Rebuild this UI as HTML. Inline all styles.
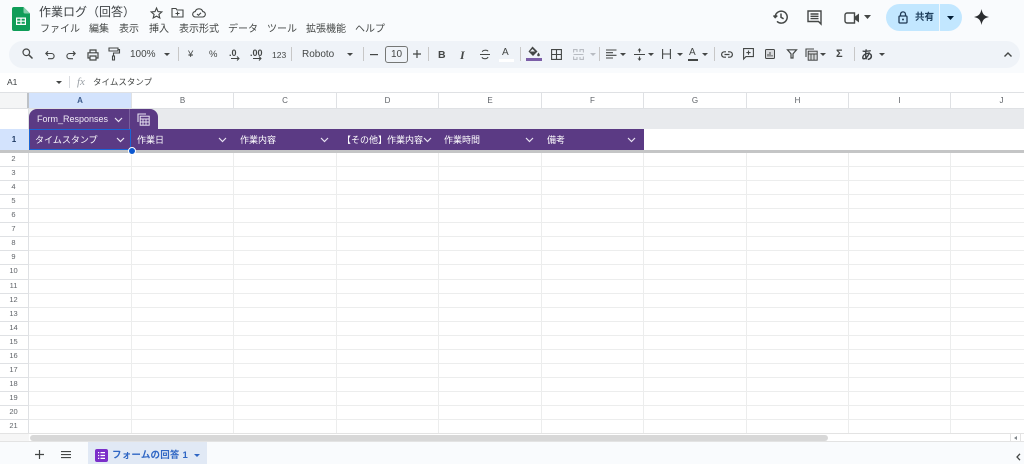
<!DOCTYPE html>
<html lang="ja">
<head>
<meta charset="utf-8">
<title>作業ログ（回答）</title>
<style>
html{background:#f9fbfd}
html,body{margin:0;padding:0;width:1024px;height:464px;overflow:hidden}
body{background:#f9fbfd;font-family:"Liberation Sans","Noto Sans CJK JP",sans-serif;color:#444746;filter:blur(.35px)}
.a{position:absolute;white-space:nowrap}
svg{position:absolute;overflow:visible}
.i{fill:none;stroke:#444746}
.f{fill:#444746}
.menu{top:23px;font-size:10px;line-height:14px;color:#444746}
.tb{top:48px;font-size:10px;line-height:14px;color:#444746}
.col{top:93px;height:16px;line-height:16px;font-size:8px;text-align:center;color:#5f6368}
.row{left:0;width:27px;text-align:center;font-size:7.5px;line-height:14px;color:#5f6368;height:14px}
.h{top:130px;height:21px;line-height:21px;font-size:9px;color:#fff}
.sep{top:47px;width:1px;height:14px;background:#c7c7c7}
</style>
</head>
<body>
<!-- logo -->
<svg style="left:12px;top:7px" width="18" height="24" viewBox="0 0 18 24"><path d="M2 0H11.5L18 6.5V22a2 2 0 0 1-2 2H2a2 2 0 0 1-2-2V2a2 2 0 0 1 2-2z" fill="#0f9d58"/><path d="M11.5 0L18 6.5H13a1.5 1.5 0 0 1-1.5-1.5z" fill="#87ceac"/><path d="M4 10.5H14V18H4z M5.2 11.7V13.6H8.4V11.7z M9.6 11.7V13.6H12.8V11.7z M5.2 14.8V16.8H8.4V14.8z M9.6 14.8V16.8H12.8V14.8z" fill="#fff" fill-rule="evenodd"/></svg>
<div class="a" style="left:39px;top:3px;font-size:12px;line-height:18px;color:#3c4043">作業ログ（回答）</div>
<svg style="left:150px;top:7px" width="13" height="12" viewBox="0 0 13 12"><path class="i" stroke-width="1.1" d="M6.5 1L8 4.6L11.8 4.9L8.9 7.4L9.8 11L6.5 9.1L3.2 11L4.1 7.4L1.2 4.9L5 4.6z"/></svg>
<svg style="left:171px;top:7px" width="13" height="11" viewBox="0 0 13 11"><path class="i" stroke-width="1.1" d="M1 1.5H5L6 3H12V10H1z M6.5 4.5V8.5 M4.5 6.5H8.5"/></svg>
<svg style="left:192px;top:7px" width="14" height="11" viewBox="0 0 14 11"><path class="i" stroke-width="1.1" d="M3.5 10A2.7 2.7 0 0 1 3.2 4.6A4 4 0 0 1 10.8 4.6A2.7 2.7 0 0 1 10.5 10z M5 7L6.5 8.3L9 5.8"/></svg>

<div class="a menu" style="left:40px">ファイル</div>
<div class="a menu" style="left:89px">編集</div>
<div class="a menu" style="left:119px">表示</div>
<div class="a menu" style="left:149px">挿入</div>
<div class="a menu" style="left:179px">表示形式</div>
<div class="a menu" style="left:228px">データ</div>
<div class="a menu" style="left:267px">ツール</div>
<div class="a menu" style="left:306px">拡張機能</div>
<div class="a menu" style="left:355px">ヘルプ</div>

<!-- top right -->
<svg style="left:773px;top:9px" width="16" height="16" viewBox="0 0 16 16"><path class="i" stroke-width="1.5" d="M2.2 8A6 6 0 1 1 4 12.4 M0.5 6.5L2.2 8.5L4.3 6.6 M8 4.5V8.3L10.6 9.8"/></svg>
<svg style="left:807px;top:10px" width="15" height="15" viewBox="0 0 15 15"><path class="i" stroke-width="1.4" d="M1 1H14V14L11.5 11.5H1z M3.5 4H11.5 M3.5 6.3H11.5 M3.5 8.6H11.5"/></svg>
<svg style="left:844px;top:12px" width="16" height="12" viewBox="0 0 16 12"><path class="i" stroke-width="1.4" d="M3 1H10.5V11H3A2 2 0 0 1 1 9V3A2 2 0 0 1 3 1z"/><path class="f" d="M11 4.5L15 1.5V10.5L11 7.5z"/></svg>
<svg style="left:864px;top:15px" width="7" height="4"><path class="f" d="M0 0H7L3.5 4z"/></svg>
<div class="a" style="left:886px;top:4px;width:76px;height:27px;background:#c2e7ff;border-radius:14px"></div>
<div class="a" style="left:939px;top:4px;width:1px;height:27px;background:#f0f8fd"></div>
<svg style="left:898px;top:11px" width="10" height="13" viewBox="0 0 10 13"><path d="M2.5 5V3.4a2.5 2.5 0 0 1 5 0V5" fill="none" stroke="#1f3a55" stroke-width="1.3"/><rect x="1" y="5" width="8" height="7" rx="1" fill="none" stroke="#1f3a55" stroke-width="1.3"/><circle cx="5" cy="8.5" r="1" fill="#1f3a55"/></svg>
<div class="a" style="left:915px;top:11px;font-size:9.5px;line-height:14px;font-weight:bold;color:#20415f">共有</div>
<svg style="left:947px;top:16px" width="7" height="4"><path d="M0 0H7L3.5 4z" fill="#001d35"/></svg>
<svg style="left:974px;top:9px" width="15" height="16" viewBox="0 0 15 16"><path d="M7.5 0C8.3 4.6 10 7 15 8C10 9 8.3 11.4 7.5 16C6.7 11.4 5 9 0 8C5 7 6.7 4.6 7.5 0z" fill="#2b2d30"/></svg>

<!-- toolbar -->
<div class="a" style="left:9px;top:41px;width:1011px;height:27px;background:#eff3f8;border-radius:14px"></div>
<svg style="left:22px;top:48px" width="11" height="11" viewBox="0 0 11 11"><circle cx="4.3" cy="4.3" r="3.3" class="i" stroke-width="1.2"/><path class="i" stroke-width="1.5" d="M6.8 6.8L10.5 10.5"/></svg>
<svg style="left:45px;top:50px" width="10" height="10" viewBox="0 0 10 10"><path class="i" stroke-width="1.1" d="M1 3.5H6.5A2.5 2.5 0 0 1 6.5 8.7H3 M3 1.3L0.8 3.5L3 5.7"/></svg>
<svg style="left:66px;top:50px" width="10" height="10" viewBox="0 0 10 10"><path class="i" stroke-width="1.1" d="M9 3.5H3.5A2.5 2.5 0 0 0 3.5 8.7H7 M7 1.3L9.2 3.5L7 5.7"/></svg>
<svg style="left:87px;top:49px" width="12" height="12" viewBox="0 0 12 12"><path class="i" stroke-width="1.2" d="M3 3.5V1H9V3.5 M3 9H1V3.8H11V9H9 M3 7H9V11H3z"/></svg>
<svg style="left:108px;top:47px" width="12" height="14" viewBox="0 0 12 14"><path class="i" stroke-width="1.1" d="M1 1H10V4H1z M10 2.5H11.5V6H5.5V9 M4.5 9H6.5V13H4.500z"/></svg>
<div class="a tb" style="left:130px">100%</div>
<svg style="left:164px;top:53px" width="6" height="3"><path class="f" d="M0 0H6L3 3z"/></svg>
<div class="a sep" style="left:178px"></div>
<div class="a tb" style="left:188px;font-size:9.5px">¥</div>
<div class="a tb" style="left:209px;font-size:9.5px">%</div>
<div class="a tb" style="left:229px;font-size:9px;font-weight:bold;top:46px">.0</div>
<svg style="left:231px;top:56px" width="9" height="5" viewBox="0 0 9 5"><path class="i" stroke-width="1" d="M0 2.5H8 M6 .5L8 2.5L6 4.5"/></svg>
<div class="a tb" style="left:250px;font-size:9px;font-weight:bold;top:46px">.00</div>
<svg style="left:253px;top:56px" width="9" height="5" viewBox="0 0 9 5"><path class="i" stroke-width="1" d="M0 2.5H8 M6 .5L8 2.5L6 4.5"/></svg>
<div class="a tb" style="left:272px;font-size:8.5px">123</div>
<div class="a sep" style="left:291px"></div>
<div class="a tb" style="left:302px">Roboto</div>
<svg style="left:347px;top:53px" width="6" height="3"><path class="f" d="M0 0H6L3 3z"/></svg>
<div class="a sep" style="left:363px"></div>
<svg style="left:370px;top:54px" width="8" height="2"><path class="f" d="M0 0H8V1.2H0z"/></svg>
<div class="a" style="left:385px;top:46px;width:21px;height:15px;border:1px solid #757775;border-radius:3px;text-align:center;font-size:10px;line-height:16px">10</div>
<svg style="left:413px;top:50px" width="8" height="8"><path class="f" d="M3.4 0H4.6V3.4H8V4.6H4.6V8H3.4V4.6H0V3.4H3.4z"/></svg>
<div class="a sep" style="left:428px"></div>
<div class="a tb" style="left:438px;font-weight:bold;font-size:10.5px">B</div>
<div class="a tb" style="left:460px;font-family:'Liberation Serif',serif;font-style:italic;font-weight:bold;font-size:12px">I</div>
<svg style="left:480px;top:49px" width="10" height="11" viewBox="0 0 10 11"><path class="i" stroke-width="1.1" d="M0 5.5H10 M8 2.3C7.4 1 3 .6 2.3 2.8 M2 8.2C2.8 10.3 7.4 10.2 8 8"/></svg>
<div class="a tb" style="left:502px;font-size:10px;top:46px">A</div>
<div class="a" style="left:499px;top:59px;width:15px;height:2.5px;background:#fff"></div>
<div class="a sep" style="left:520px"></div>
<svg style="left:527px;top:46px" width="14" height="11" viewBox="0 0 14 11"><path class="f" d="M5.5 .5L10.5 5.5L6 10L1.5 5.5z"/><path d="M5.5 3L8 5.5H3z" fill="#eff3f8"/><path class="f" d="M11.5 6.5C12.3 7.8 12.8 8.4 12.8 9A1.3 1.3 0 0 1 10.2 9C10.2 8.4 10.7 7.8 11.5 6.5z"/></svg>
<div class="a" style="left:526px;top:58px;width:16px;height:3px;background:#7b5ea7"></div>
<svg style="left:551px;top:49px" width="11" height="11" viewBox="0 0 11 11"><path class="i" stroke-width="1.1" d="M.6.6H10.4V10.4H.6z M5.5.6V10.4 M.6 5.5H10.4"/></svg>
<svg style="left:573px;top:49px" width="11" height="11" viewBox="0 0 11 11"><path fill="none" stroke="#b8bcc2" stroke-width="1.1" d="M.6 3.5V.6H4V3 M7 3V.6H10.4V3.5 M.6 7.5V10.4H4V8 M7 8V10.4H10.4V7.5 M.6 5.5H10.4"/></svg>
<svg style="left:590px;top:53px" width="6" height="3"><path d="M0 0H6L3 3z" fill="#b8bcc2"/></svg>
<div class="a sep" style="left:599px"></div>
<svg style="left:606px;top:49px" width="11" height="11" viewBox="0 0 11 11"><path class="i" stroke-width="1.1" d="M0 1H10.5 M0 3.7H7 M0 6.3H10.5 M0 9H7"/></svg>
<svg style="left:620px;top:53px" width="6" height="3"><path class="f" d="M0 0H6L3 3z"/></svg>
<svg style="left:634px;top:48px" width="11" height="13" viewBox="0 0 11 13"><path class="i" stroke-width="1.1" d="M0 6.5H11 M5.5 .5V4.5 M5.5 8.5V12.5"/><path class="f" d="M3.5 2.5H7.5L5.5 .3z M3.5 10.5H7.5L5.5 12.7z"/></svg>
<svg style="left:648px;top:53px" width="6" height="3"><path class="f" d="M0 0H6L3 3z"/></svg>
<svg style="left:662px;top:49px" width="9" height="10" viewBox="0 0 9 10"><path class="i" stroke-width="1.1" d="M.6 0V10 M8.4 0V10 M.6 5H8.4"/></svg>
<svg style="left:677px;top:53px" width="6" height="3"><path class="f" d="M0 0H6L3 3z"/></svg>
<div class="a tb" style="left:689px;font-size:10px;top:46px">A</div>
<div class="a" style="left:688px;top:59px;width:10px;height:1.5px;background:#444746"></div>
<svg style="left:702px;top:53px" width="6" height="3"><path class="f" d="M0 0H6L3 3z"/></svg>
<div class="a sep" style="left:714px"></div>
<svg style="left:721px;top:51px" width="12" height="7" viewBox="0 0 12 7"><path class="i" stroke-width="1.2" d="M5 .8H3.3a2.7 2.7 0 0 0 0 5.4H5 M7 .8H8.7a2.7 2.7 0 0 1 0 5.4H7 M3.5 3.5H8.5"/></svg>
<svg style="left:743px;top:48px" width="11" height="12" viewBox="0 0 11 12"><path class="i" stroke-width="1.1" d="M.6.6H10.4V8.6H3L.6 11z M5.5 2.5V6.7 M3.4 4.6H7.6"/></svg>
<svg style="left:765px;top:49px" width="10" height="10" viewBox="0 0 10 10"><rect x=".5" y=".5" width="9" height="9" rx="1" fill="#d7d9dc" stroke="#444746"/><path class="i" stroke-width="1" d="M3 7.5V5 M5 7.5V3 M7 7.5V6"/></svg>
<svg style="left:787px;top:49px" width="10" height="10" viewBox="0 0 10 10"><path class="i" stroke-width="1.2" d="M.5.8H9.500L6 4.800V9H4V4.800z"/></svg>
<svg style="left:805px;top:48px" width="13" height="13" viewBox="0 0 13 13"><path class="i" stroke-width="1.1" d="M1 9V1H9"/><rect x="3.200" y="3.200" width="9" height="9" fill="#d7d9dc" stroke="#444746"/><path class="i" stroke-width=".9" d="M3.200 6H12.200 M6 6V12 M9 6V12"/></svg>
<svg style="left:820px;top:53px" width="6" height="3"><path class="f" d="M0 0H6L3 3z"/></svg>
<div class="a tb" style="left:836px;font-size:11px;font-weight:bold;top:47px">Σ</div>
<div class="a sep" style="left:854px"></div>
<div class="a" style="left:861px;top:47px;font-size:12px;line-height:16px;font-weight:bold;color:#3c4043">あ</div>
<svg style="left:879px;top:53px" width="6" height="3"><path class="f" d="M0 0H6L3 3z"/></svg>
<svg style="left:1004px;top:52px" width="8" height="5" viewBox="0 0 8 5"><path class="i" stroke-width="1.4" d="M.5 4.500L4 1L7.500 4.500"/></svg>

<!-- formula bar -->
<div class="a" style="left:0;top:73px;width:1024px;height:19px;background:#fff"></div>
<div class="a" style="left:7px;top:76px;font-size:8.5px;line-height:13px;color:#3c4043">A1</div>
<svg style="left:56px;top:81px" width="6" height="3"><path class="f" d="M0 0H6L3 3z"/></svg>
<div class="a" style="left:69px;top:76px;width:1px;height:12px;background:#dadce0"></div>
<div class="a" style="left:77px;top:75px;font-family:'Liberation Serif',serif;font-style:italic;font-size:11px;line-height:15px;color:#9aa0a6">fx</div>
<div class="a" style="left:93px;top:76px;font-size:8.5px;line-height:12px;color:#444746">タイムスタンプ</div>

<!-- sheet white area -->
<div class="a" style="left:0;top:92px;width:1024px;height:341px;background:#fff"></div>
<div class="a" style="left:0;top:92px;width:1024px;height:1px;background:#dfe1e4"></div>
<div class="a" style="left:0;top:93px;width:27px;height:15px;background:#f4f5f6"></div>
<div class="a" style="left:27px;top:93px;width:2px;height:15px;background:#bdc1c6"></div>
<div class="a" style="left:29px;top:93px;width:102px;height:15px;background:#d3e3fd"></div>
<!-- grid -->
<svg style="left:0;top:0" width="1024" height="464">
<g fill="#eceded">
<rect x="29" y="166" width="995" height="1"/><rect x="29" y="180" width="995" height="1"/><rect x="29" y="194" width="995" height="1"/><rect x="29" y="208" width="995" height="1"/><rect x="29" y="222" width="995" height="1"/><rect x="29" y="236" width="995" height="1"/><rect x="29" y="250" width="995" height="1"/><rect x="29" y="264" width="995" height="1"/><rect x="29" y="279" width="995" height="1"/><rect x="29" y="293" width="995" height="1"/><rect x="29" y="307" width="995" height="1"/><rect x="29" y="321" width="995" height="1"/><rect x="29" y="335" width="995" height="1"/><rect x="29" y="349" width="995" height="1"/><rect x="29" y="363" width="995" height="1"/><rect x="29" y="377" width="995" height="1"/><rect x="29" y="391" width="995" height="1"/><rect x="29" y="405" width="995" height="1"/><rect x="29" y="419" width="995" height="1"/>
<rect x="131" y="152" width="1" height="281"/><rect x="233" y="152" width="1" height="281"/><rect x="336" y="152" width="1" height="281"/><rect x="438" y="152" width="1" height="281"/><rect x="541" y="152" width="1" height="281"/><rect x="643" y="152" width="1" height="281"/><rect x="746" y="152" width="1" height="281"/><rect x="848" y="152" width="1" height="281"/><rect x="950" y="152" width="1" height="281"/>
</g>
<g fill="#dfe1e4">
<rect x="131" y="93" width="1" height="15"/><rect x="233" y="93" width="1" height="15"/><rect x="336" y="93" width="1" height="15"/><rect x="438" y="93" width="1" height="15"/><rect x="541" y="93" width="1" height="15"/><rect x="643" y="93" width="1" height="15"/><rect x="746" y="93" width="1" height="15"/><rect x="848" y="93" width="1" height="15"/><rect x="950" y="93" width="1" height="15"/>
<rect x="0" y="108" width="1024" height="1"/>
<rect x="28" y="109" width="1" height="324"/>
<rect x="0" y="166" width="28" height="1"/><rect x="0" y="180" width="28" height="1"/><rect x="0" y="194" width="28" height="1"/><rect x="0" y="208" width="28" height="1"/><rect x="0" y="222" width="28" height="1"/><rect x="0" y="236" width="28" height="1"/><rect x="0" y="250" width="28" height="1"/><rect x="0" y="264" width="28" height="1"/><rect x="0" y="279" width="28" height="1"/><rect x="0" y="293" width="28" height="1"/><rect x="0" y="307" width="28" height="1"/><rect x="0" y="321" width="28" height="1"/><rect x="0" y="335" width="28" height="1"/><rect x="0" y="349" width="28" height="1"/><rect x="0" y="363" width="28" height="1"/><rect x="0" y="377" width="28" height="1"/><rect x="0" y="391" width="28" height="1"/><rect x="0" y="405" width="28" height="1"/><rect x="0" y="419" width="28" height="1"/>
</g>
</svg>
<div class="a col" style="left:29px;width:102px;font-weight:bold;color:#3c5a8a">A</div>
<div class="a col" style="left:132px;width:101px">B</div>
<div class="a col" style="left:234px;width:102px">C</div>
<div class="a col" style="left:337px;width:101px">D</div>
<div class="a col" style="left:439px;width:102px">E</div>
<div class="a col" style="left:542px;width:101px">F</div>
<div class="a col" style="left:644px;width:102px">G</div>
<div class="a col" style="left:747px;width:101px">H</div>
<div class="a col" style="left:849px;width:101px">I</div>
<div class="a col" style="left:951px;width:101px">J</div>

<!-- table band -->
<div class="a" style="left:29px;top:109px;width:995px;height:20px;background:#e8eaed"></div>
<div class="a" style="left:29px;top:109px;width:129px;height:20px;background:#5b3a84;border-radius:8px 8px 0 0"></div>
<div class="a" style="left:129px;top:109px;width:1px;height:20px;background:#7a5f9e"></div>
<div class="a" style="left:37px;top:112px;font-size:9px;line-height:15px;color:#f1edf6">Form_Responses</div>
<svg style="left:114px;top:117px" width="9" height="6" viewBox="0 0 9 6"><path fill="none" stroke="#e9e3f2" stroke-width="1.2" d="M1 1L4.5 4.5L8 1"/></svg>
<svg style="left:137px;top:113px" width="13" height="13" viewBox="0 0 13 13"><path fill="none" stroke="#e9e3f2" stroke-width="1.1" d="M1 9V1H9"/><rect x="3.2" y="3.2" width="9" height="9" fill="none" stroke="#e9e3f2"/><path fill="none" stroke="#e9e3f2" stroke-width=".9" d="M3.2 6H12.2 M6 6V12 M9 6V12 M3.2 9H12.2"/></svg>

<!-- row 1 -->
<div class="a" style="left:0;top:129px;width:28px;height:21px;background:#d3e3fd;text-align:center;font-size:8px;font-weight:bold;line-height:21px;color:#1f3a63">1</div>
<div class="a" style="left:29px;top:129px;width:615px;height:21px;background:#5b3a84"></div>
<div class="a h" style="left:35px">タイムスタンプ</div>
<div class="a h" style="left:137px">作業日</div>
<div class="a h" style="left:240px">作業内容</div>
<div class="a h" style="left:342px;width:81px;overflow:hidden">【その他】作業内容</div>
<div class="a h" style="left:444px">作業時間</div>
<div class="a h" style="left:547px">備考</div>
<svg style="left:0;top:0" width="1024" height="464"><g fill="none" stroke="#e9e3f2" stroke-width="1.2"><path d="M117 138L120.5 141.5L124 138"/><path d="M219 138L222.5 141.5L226 138"/><path d="M321 138L324.5 141.5L328 138"/><path d="M424 138L427.5 141.5L431 138"/><path d="M526 138L529.5 141.5L533 138"/><path d="M628 138L631.5 141.5L635 138"/></g></svg>
<div class="a" style="left:29px;top:129px;width:102px;height:21px;box-sizing:border-box;border:1px solid #1a63d6"></div>
<div class="a" style="left:0;top:150px;width:1024px;height:2.5px;background:#c4c5c6"></div>
<div class="a" style="left:128px;top:147px;width:6px;height:6px;border-radius:50%;background:#0b57d0;border:.5px solid #fff"></div>

<!-- row numbers -->
<div class="a row" style="top:152px">2</div><div class="a row" style="top:166px">3</div><div class="a row" style="top:180px">4</div><div class="a row" style="top:194px">5</div><div class="a row" style="top:208px">6</div><div class="a row" style="top:222px">7</div><div class="a row" style="top:236px">8</div><div class="a row" style="top:250px">9</div><div class="a row" style="top:264px">10</div><div class="a row" style="top:279px">11</div><div class="a row" style="top:293px">12</div><div class="a row" style="top:307px">13</div><div class="a row" style="top:321px">14</div><div class="a row" style="top:335px">15</div><div class="a row" style="top:349px">16</div><div class="a row" style="top:363px">17</div><div class="a row" style="top:377px">18</div><div class="a row" style="top:391px">19</div><div class="a row" style="top:405px">20</div><div class="a row" style="top:419px">21</div>

<!-- scrollbar -->
<div class="a" style="left:0;top:433px;width:1024px;height:9px;background:#fff;border-top:1px solid #e3e3e3;border-bottom:1px solid #e3e3e3;box-sizing:border-box"></div>
<div class="a" style="left:0;top:434px;width:29px;height:7px;background:#f6f6f6"></div>
<div class="a" style="left:30px;top:434.5px;width:798px;height:6px;background:#d8d8d8;border-radius:3px"></div>
<div class="a" style="left:1010px;top:434px;width:1px;height:7px;background:#e3e3e3"></div>
<div class="a" style="left:1020px;top:434px;width:1px;height:7px;background:#e3e3e3"></div>
<svg style="left:1014px;top:436px" width="3" height="4"><path d="M3 0V4L0 2z" fill="#80868b"/></svg>

<!-- bottom bar -->
<svg style="left:35px;top:450px" width="9" height="9"><path class="f" d="M3.9 0H5.1V3.9H9V5.1H5.1V9H3.9V5.1H0V3.9H3.9z"/></svg>
<svg style="left:61px;top:451px" width="10" height="7"><path class="f" d="M0 0H10V1.1H0z M0 3H10V4.1H0z M0 6H10V7.1H0z"/></svg>
<div class="a" style="left:88px;top:442px;width:119px;height:22px;background:#e1e9f5"></div>
<svg style="left:95px;top:449px" width="13" height="13" viewBox="0 0 13 13"><rect width="13" height="13" rx="2" fill="#7b2fc9"/><path d="M3 3H4.2V4.2H3z M5.5 3H10V4.2H5.5z M3 5.9H4.2V7.1H3z M5.5 5.9H10V7.1H5.5z M3 8.8H4.2V10H3z M5.5 8.8H10V10H5.5z" fill="#fff"/></svg>
<div class="a" style="left:112px;top:449px;font-size:9.5px;line-height:14px;font-weight:bold;letter-spacing:.2px;color:#2f66c4">フォームの回答 1</div>
<svg style="left:194px;top:454px" width="6" height="3"><path d="M0 0H6L3 3z" fill="#2f66c4"/></svg>
<svg style="left:1016px;top:453px" width="5" height="8" viewBox="0 0 5 8"><path class="i" stroke-width="1.3" d="M4 .8L1 4L4 7.2"/></svg>
</body>
</html>
